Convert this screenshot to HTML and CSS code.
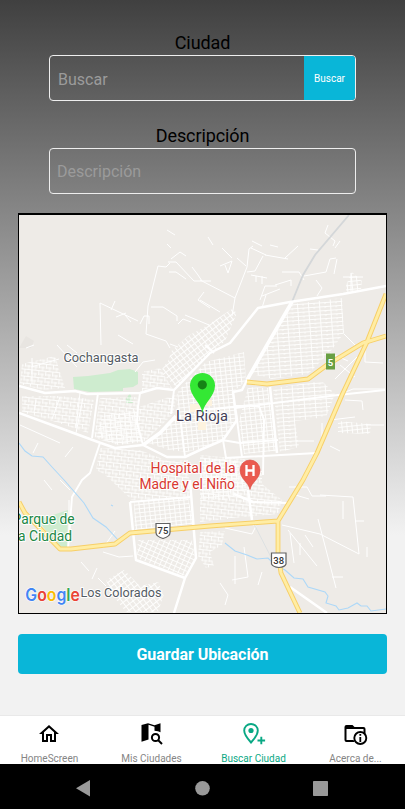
FILE: index.html
```html
<!DOCTYPE html>
<html lang="es">
<head>
<meta charset="utf-8">
<meta name="viewport" content="width=device-width, initial-scale=1">
<title>Buscar Ciudad</title>
<link rel="stylesheet" href="styles.css">
</head>
<body>
<main class="screen">
  <section class="form">
    <label class="label" for="city">Ciudad</label>
    <div class="field">
      <input class="input input-city" id="city" type="text" placeholder="Buscar">
      <button class="search" type="button">Buscar</button>
    </div>
    <label class="label label-second" for="desc">Descripción</label>
    <div class="field">
      <input class="input" id="desc" type="text" placeholder="Descripción">
    </div>
  </section>

  <svg class="map" viewBox="19 215 367 398" preserveAspectRatio="none">
    <defs>
      <pattern id="gA" width="5" height="4" patternUnits="userSpaceOnUse" patternTransform="rotate(-6)"><path d="M0 .5H5M.5 0V4" /></pattern>
      <pattern id="gB" width="4.5" height="5" patternUnits="userSpaceOnUse" patternTransform="rotate(-38)"><path d="M0 .5H4.5M.5 0V5" /></pattern>
      <pattern id="gC" width="11" height="4" patternUnits="userSpaceOnUse" patternTransform="rotate(-4)"><path d="M0 .5H11M.5 0V4M6 0V2" /></pattern>
      <pattern id="gD" width="5" height="4.5" patternUnits="userSpaceOnUse" patternTransform="rotate(24)"><path d="M0 .5H5M.5 0V4.5" /></pattern>
      <pattern id="gE" width="7" height="7" patternUnits="userSpaceOnUse" patternTransform="rotate(6)"><path d="M0 .5H7M.5 0V5M4 3V7M1 4H6" /></pattern>
    </defs>
    <rect x="19" y="215" width="367" height="398" fill="#eeebe7"/>
    <path d="M19 348L26 336L34 341L31 348Z" fill="#e8e5e1"/>
    <g fill="#ceeccf">
      <path d="M73 377L88 376L110 373L118 370L130 369L138 372L138 384L133 387L123 388L123 391L90 392L74 389Z"/>
      <path d="M130 393L133 403L126 403L126 399Z"/>
      <path d="M38 520L68 510L67 547L58 547Z"/>
    </g>

    <g class="grids">
      <path fill="url(#gE)" d="M22 364L55 356L65 388L43 390L20 384Z M22 396L58 396L82 398L94 400L88 433L56 422L22 412Z"/>
      <path fill="url(#gB)" d="M172 350L188 336L206 326L232 309L237 313L225 341L206 358L176 387L160 372L168 361Z"/>
      <path fill="url(#gA)" d="M178 391L206 362L244 352L246 381L233 392L237 420L226 438L203 448L187 452L169 450L148 443L177 415Z"/>
      <path fill="url(#gE)" d="M100 398L137 397L139 407L178 394L173 414L145 441L118 445L101 440L94 437Z M142 372L160 368L172 388L158 386L142 391Z"/>
      <path fill="url(#gA)" d="M102 416L137 410L142 442L118 445L97 437Z"/>
      <path fill="url(#gC)" d="M293 304L342 298L344 333L330 352L308 374L272 379L252 374L270 342Z"/>
      <path fill="url(#gA)" d="M248 387L268 388L276 451L244 454L239 421Z"/>
      <path fill="url(#gC)" d="M273 388L322 381L335 394L326 417L295 421L299 447L280 452Z"/>
      <path fill="url(#gE)" d="M100 448L140 450L168 461L188 460L190 500L132 500L104 474L96 470Z M200 455L244 459L262 470L262 484L282 500L278 514L253 516L200 522Z"/>
      <path fill="url(#gA)" d="M134 502L188 498L194 524L160 527L135 530Z M200 458L237 460L247 490L225 500L200 500Z"/>
      <path fill="url(#gD)" d="M138 540L192 540L195 558L184 576L137 558Z"/>
      <path fill="url(#gB)" d="M106 580L124 570L140 586L158 582L164 594L158 612L126 612L112 594Z"/>
      <path fill="url(#gE)" d="M200 532L225 531L222 545L210 552L214 566L206 568L198 556Z"/>
      <path fill="url(#gA)" d="M338 421L371 424L370 434L338 433Z M346 285L352 272L362 281L361 289L346 293Z"/>
    </g>

    <g class="lanes">
      <path d="M175 235l-8-5M167 244l4 4M171 259l9-7l6 4M168 262h8l18 19h17M158 266l-10 40l-2 28M158 266l8 1l4-4M169 272l7 0l10 7M192 267l6 8l4 6M151 307h12l14 9v5M100 303l38 18M100 303l1 42M111 310l4-9M116 317l10-4M125 315l6 7M118 335l15 9M146 334l20 7l4 7M170 344l8 3M178 324l5-5l8 3M185 315l24 10M198 300l12 8M198 300l6-8M140 324l4-8h5v8M135 372l8-10l12-2"/>
      <path d="M200 280l35 18M200 300l20 12M249 249l-2 18l-12 31l-3 18M249 249l4-3M252 241l10 5M251 248l15 7M265 255l23 4M263 256l-8 15l-8 1M285 258l13-12M270 245l8 2M237 258l9 8M222 248l10 10M208 237l5 8M220 266l12-5l-4 12l-3-8M251 275l16 3M256 276v6M262 276v8M275 285l16-5v6M266 295l-4 13M282 272l17 0l5 8M304 276l22-4l4-13l6-1M328 225l-3 8l10 8l-2 5M310 249l8 1M335 248l5-7M337 259l-3 15M316 280l6 8l-5 8M260 300l5-14l12 0M280 289l-18 7M343 277h20M351 273v18M344 334l12 12M330 353l18 8M340 365l15 12M335 379l22-22"/>
      <path d="M26 348l8-3M31 367l28-8M32 358v26M36 400l-2 12M57 345l20 22M67 345l10 8M80 393l-4 35M60 397l-8 22M83 398l-7 35M20 425l40 18M38 443l-5 10M73 447l-8 10M69 500v42M60 480l10 10M44 480l8 10M97 568l-5 11M103 548l12-17M103 552l16 5l14-1M81 562l8 9M98 578l8 8"/>
      <path d="M282 525l38 9l39 20l-6-57l-33-2M288 530l29 36M318 519l18 69M332 577h11M355 521h9M343 501v18M290 533l4 30M300 543v12M305 535l8 12M367 547v10M289 487h18l5 9h14M292 494l17 5M366 425h18M343 393l10-4h32M330 420l25-3M345 400l17 1l1 9M365 345v17l18 1M322 423v24M330 446l10 5M296 441h18M258 585l4-13M220 583l8 12l-3 10M235 556v28M244 547l4 30l-16 3M225 528l27 6l4-8l-8-3"/>
    </g>
    <path class="rail" d="M349 215L315 255L303 275L292 302"/>
    <path d="M253 522L274 563" fill="none" stroke="#dde1e2" stroke-width="1"/>

    <g class="roads">
      <path d="M19 386L45 393L75 391L87 394L140 393L157 388L174 390L210 353L230 343L258 308L290 302L343 294L386 286"/>
      <path class="wide" d="M292 302L267 345L247 380"/>
      <path d="M247 380L242 390L233 392L235 407L237 420L223 440L200 450L185 457L167 457L143 445"/>
      <path d="M19 413L60 428L98 442L115 448L143 445"/>
      <path class="wide" d="M143 445L160 433L176 416"/>
      <path class="thin" d="M98 393L92 438M100 443L90 473L82 480L72 497L68 550M140 393L138 407L137 423L143 445M174 390L171 414M180 415L185 457M235 408L338 395L385 390M237 420L242 457M225 458L317 453M235 406H259L264 420L263 475M223 440L226 458M200 410L235 407M252 502L288 503M130 502L190 497M214 353L205 345M222 440L240 443L278 440"/>
      <path d="M270 387L277 453M248 490L252 520M234 494L253 502M130 502L136 560L185 578L174 613M190 480L196 558L185 578M290 587L327 613"/>
    </g>
    <g class="rivers">
      <path d="M19 443L25 451L32 456L43 457L52 467L65 481L84 503L93 518L106 527L119 541M111 505l2 1"/>
      <path d="M225 543L235 551L247 555L257 559L268 558L275 565L285 570L294 578L303 579L308 587L325 592L328 596L326 603L336 606L339 610L348 608L357 603L361 606L367 606L371 611L386 609"/>
    </g>
    <g class="highway-case">
      <path d="M19 502L25 513L60 549L71 549L115 544L130 533L210 526L278 521L303 480L317 453L342 395L367 342L386 294M278 521V553L281 573L300 613M247 382L267 384L308 379L327 365L363 343L386 336"/>
    </g>
    <g class="highway">
      <path d="M19 502L25 513L60 549L71 549L115 544L130 533L210 526L278 521L303 480L317 453L342 395L367 342L386 294M278 521V553L281 573L300 613M247 382L267 384L308 379L327 365L363 343L386 336"/>
    </g>
    <g fill="#fdf3df"><path d="M190 404h12v8h-12zM198 422h8v8h-8zM206 400h6v6h-6z"/></g>

    <rect x="326" y="353.500" width="9" height="16" fill="#689f43"/>
    <text class="shield-five" x="330.500" y="365.500">5</text>
    <g class="shield">
      <path d="M156 523.500h14v9q0 4-7 6q-7-2-7-6z"/>
      <path d="M271.500 553h14.500v11q-1 3-7 3.500q-6-.5-7.500-3.500z"/>
    </g>
    <text class="shield-text" x="163" y="534">75</text>
    <text class="shield-text" x="278.700" y="564">38</text>

    <text class="place" x="63.500" y="361.500" textLength="75" lengthAdjust="spacingAndGlyphs">Cochangasta</text>
    <text class="place" x="80.500" y="596.500" textLength="81" lengthAdjust="spacingAndGlyphs">Los Colorados</text>
    <text class="city" x="176" y="420.500" textLength="52" lengthAdjust="spacingAndGlyphs">La Rioja</text>
    <text class="hospital" x="150.500" y="472.500" textLength="85" lengthAdjust="spacingAndGlyphs">Hospital de la</text>
    <text class="hospital" x="139.500" y="489" textLength="95.500" lengthAdjust="spacingAndGlyphs">Madre y el Niño</text>
    <text class="park" x="12.500" y="524" textLength="62" lengthAdjust="spacingAndGlyphs">Parque de</text>
    <text class="park" x="10.500" y="540.500" textLength="61.500" lengthAdjust="spacingAndGlyphs">La Ciudad</text>

    <path d="M250 489.500C248.500 482 240 479 240 470A10 10 0 1 1 260 470C260 479 251.500 482 250 489.500Z" fill="#ea5b50" stroke="#d84a42" stroke-width=".6"/>
    <path d="M246.500 465V476M253.500 465V476M246.500 470.500H253.500" fill="none" stroke="#fff" stroke-width="2.300"/>
    <path d="M202.500 413C201 402 190 397 190 385.500A12.500 12.500 0 0 1 215 385.500C215 397 204 402 202.500 413Z" fill="#34e834"/>
    <circle cx="202.300" cy="384.800" r="4.600" fill="#168316"/>
    <text class="google" x="25.300" y="601" textLength="54.500" lengthAdjust="spacingAndGlyphs"><tspan fill="#4285f4">G</tspan><tspan fill="#ea4335">o</tspan><tspan fill="#fbbc05">o</tspan><tspan fill="#4285f4">g</tspan><tspan fill="#34a853">l</tspan><tspan fill="#ea4335">e</tspan></text>
  </svg>

  <button class="save" type="button">Guardar Ubicación</button>
</main>

<nav class="tabs">
  <a class="tab">
    <svg class="icon icon-home" viewBox="0 0 24 24"><path fill="currentColor" d="M12 5.690L17 10.190V18H15V12H9V18H7V10.190L12 5.690M12 3L2 12H5V20H11V14H13V20H19V12H22L12 3Z"/></svg>
    <span>HomeScreen</span>
  </a>
  <a class="tab">
    <svg class="icon" viewBox="0 0 24 24"><path fill="currentColor" d="M1.500 3L8 1.200L14.500 3.300L20.500 1.300V10.300Q18.500 8.800 14.500 8.800V4.800L8.500 2.800V17.500L1.500 19.800Z"/><circle cx="15.500" cy="15.500" r="3.600" fill="none" stroke="currentColor" stroke-width="2"/><path d="M18 18L22 22" stroke="currentColor" stroke-width="2"/></svg>
    <span>Mis Ciudades</span>
  </a>
  <a class="tab tab-active">
    <svg class="icon" viewBox="0 0 24 24"><path fill="none" stroke="currentColor" stroke-width="1.900" d="M9 2C5.200 2 2.200 4.900 2.200 8.600C2.200 12.700 6.200 17.500 9 20.500C11.800 17.500 15.800 12.700 15.800 8.600C15.800 4.900 12.800 2 9 2Z"/><circle cx="9" cy="8.500" r="2.600" fill="currentColor"/><path d="M19.300 14.700V22.300M15.500 18.500H23.100" stroke="currentColor" stroke-width="1.900"/></svg>
    <span>Buscar Ciudad</span>
  </a>
  <a class="tab">
    <svg class="icon" viewBox="0 0 24 24"><path fill="currentColor" d="M.5 5Q.5 3 2.500 3H8.500L10.500 5H19.500Q21.500 5 21.500 7V12L19.500 11V7H2.500V18H9.500L10.500 20H2.500Q.5 20 .5 18Z"/><circle cx="16.300" cy="16" r="6" fill="#fff" stroke="currentColor" stroke-width="1.900"/><path d="M16.300 12V13.800M16.300 15V20" stroke="currentColor" stroke-width="1.800"/></svg>
    <span>Acerca de...</span>
  </a>
</nav>
<footer class="system">
  <svg viewBox="0 0 405 45"><g fill="#999"><path d="M76 24.300L90 16V32.500Z"/><circle cx="202.500" cy="24.300" r="7.300"/><rect x="313" y="17" width="15" height="15" rx=".7"/></g></svg>
</footer>
</body>
</html>
```
FILE: styles.css
```css
* { box-sizing: border-box; }

body {
  margin: 0;
  width: 405px;
  height: 809px;
  overflow: hidden;
  display: flex;
  flex-direction: column;
  font-family: Roboto, "Liberation Sans", sans-serif;
  background: #f2f2f2;
}

.screen {
  height: 716px;
  flex: none;
  display: flex;
  flex-direction: column;
  padding: 31px 18px 0;
  background: linear-gradient(#404040 0, #f2f2f2 535px);
  border-bottom: 1px solid #e9e9e9;
}

.form {
  display: flex;
  flex-direction: column;
  padding: 0 31px;
}

.label {
  height: 24px;
  line-height: 24px;
  font-size: 18px;
  letter-spacing: -.1px;
  text-align: center;
  color: #000;
}
.label-second { margin-top: 23px; }

.field {
  display: flex;
  height: 46px;
  border: 1px solid #eee;
  border-radius: 4px;
  overflow: hidden;
}

.input {
  flex: 1;
  min-width: 0;
  padding: 1px 7px 0;
  border: 0;
  outline: 0;
  background: transparent;
  font: 16px Roboto, sans-serif;
}
.input-city { padding: 2px 8px 0; }
.input::placeholder { color: #9b9b9b; opacity: 1; }

.search {
  width: 51px;
  padding: 1px 0 0;
  border: 0;
  background: #09b6d8;
  color: #fff;
  font: 10px Roboto, sans-serif;
}

.map {
  display: block;
  flex: none;
  width: 369px;
  height: 401px;
  margin-top: 19px;
  border: 1px solid #000;
  border-top-width: 2px;
}

pattern path { stroke: #fefefd; stroke-width: .95; fill: none; }
.lanes { fill: none; stroke: #fff; stroke-width: 1; }
.roads { fill: none; stroke: #fff; stroke-width: 2.5; stroke-linejoin: round; }
.roads .wide { stroke-width: 3.6; }
.roads .thin { stroke-width: 1.9; }
.rail { fill: none; stroke: #d4d7d9; stroke-width: 1.8; }
.rivers { fill: none; stroke: #add8f8; stroke-width: 1.1; }
.highway-case { fill: none; stroke: #f7cf68; stroke-width: 4.8; stroke-linejoin: round; }
.highway { fill: none; stroke: #ffeda4; stroke-width: 2.9; stroke-linejoin: round; }

.map text { paint-order: stroke; stroke: #fff; stroke-width: 2px; stroke-linejoin: round; }
.map .place { font-size: 13.5px; fill: #545b63; }
.map .city { font-size: 15.5px; fill: #413b55; }
.map .hospital { font-size: 14.5px; fill: #d93831; }
.map .park { font-size: 14.5px; fill: #218745; }
.map .shield-five { font-size: 9.5px; font-weight: 700; fill: #fff; stroke: none; text-anchor: middle; }
.shield { fill: #fff; stroke: #626262; stroke-width: 1.2; }
.map .shield-text { font-size: 9.5px; font-weight: 500; fill: #333; stroke: none; text-anchor: middle; }
.map .google { font: 600 17px Inter, sans-serif; stroke-width: 1px; }

.save {
  flex: none;
  height: 40px;
  margin-top: 20px;
  padding-top: 2px;
  border: 0;
  border-radius: 4px;
  background: #09b6d8;
  color: #fff;
  font: 700 16px Roboto, sans-serif;
  letter-spacing: -.05px;
}

.tabs {
  flex: none;
  width: 408px;
  height: 48px;
  margin-left: -1.5px;
  display: grid;
  grid-template-columns: repeat(4, 1fr);
  background: #fff;
  overflow: hidden;
}
.tab {
  display: flex;
  flex-direction: column;
  align-items: center;
  padding-top: 6px;
  color: #000;
}
.icon { width: 24px; height: 24px; }
.icon-home { margin-left: -1px; }
.tab span {
  margin-top: 6px;
  font-size: 10px;
  line-height: 13px;
  color: #858585;
}
.tab-active, .tab-active span { color: #09a884; }

.system { height: 45px; background: #000; }
.system svg { display: block; width: 405px; height: 45px; }
```
